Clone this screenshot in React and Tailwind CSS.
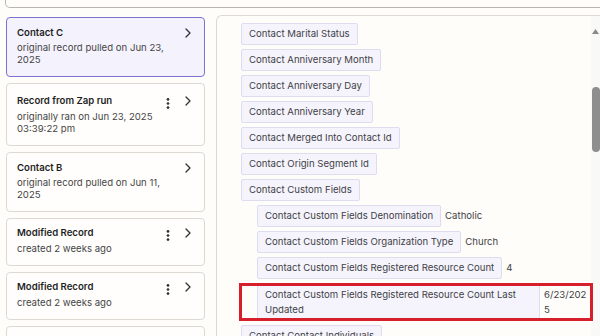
import React from 'react';

const records = [
  { title: 'Contact C', lines: ['original record pulled on Jun 23,', '2025'], active: true, pad: 'pt-[8px] pb-[10px]' },
  { title: 'Record from Zap run', lines: ['originally ran on Jun 23, 2025', '03:39:22 pm'], menu: true, pad: 'pt-[10px] pb-[10px]' },
  { title: 'Contact B', lines: ['original record pulled on Jun 11,', '2025'], pad: 'pt-[8px] pb-[10px]' },
  { title: 'Modified Record', lines: ['created 2 weeks ago'], menu: true, pad: 'pt-[7px] pb-[10px]' },
  { title: 'Modified Record', lines: ['created 2 weeks ago'], menu: true, pad: 'pt-[7px] pb-[10px]' },
  { title: 'Modified Record', lines: ['created 2 weeks ago'], menu: true, pad: 'pt-[7px] pb-[10px]' },
];

const fields = [
  { label: 'Contact Marital Status' },
  { label: 'Contact Anniversary Month' },
  { label: 'Contact Anniversary Day' },
  { label: 'Contact Anniversary Year' },
  { label: 'Contact Merged Into Contact Id' },
  { label: 'Contact Origin Segment Id' },
  { label: 'Contact Custom Fields' },
  { label: 'Contact Custom Fields Denomination', value: 'Catholic', sub: true },
  { label: 'Contact Custom Fields Organization Type', value: 'Church', sub: true },
  { label: 'Contact Custom Fields Registered Resource Count', value: '4', sub: true },
  { label: 'Contact Custom Fields Registered Resource Count Last Updated', value: '6/23/2025', sub: true, marked: true },
  { label: 'Contact Contact Individuals' },
];

const Kebab = () => (
  <svg width="4" height="11" viewBox="0 0 4 11" className="mt-[4px] shrink-0">
    <circle cx="2" cy="1.4" r="1.35" fill="#2f2f2f" />
    <circle cx="2" cy="5.5" r="1.35" fill="#2f2f2f" />
    <circle cx="2" cy="9.6" r="1.35" fill="#2f2f2f" />
  </svg>
);

const Chevron = () => (
  <svg width="6" height="10" viewBox="0 0 6 10" className="mt-[2px] ml-[15px] shrink-0">
    <path d="M1 1l4 4-4 4" fill="none" stroke="#333" strokeWidth="1.3" strokeLinecap="round" strokeLinejoin="round" />
  </svg>
);

const RecordCard = ({ title, lines, active, menu, pad }) => (
  <div
    className={`rounded-[4px] border pl-[10px] pr-[13px] ${pad} ${
      active ? 'border-[#7d72cf] bg-[#f4f2fd]' : 'border-[#dcd9d3] bg-[#fffefc]'
    }`}
  >
    <div className="flex items-start">
      <div className="flex-1 text-[9.6px] font-semibold leading-[14px] text-[#1f1f1f]">{title}</div>
      {menu && <Kebab />}
      <Chevron />
    </div>
    <div className="mt-[2px]">
      {lines.map((l, i) => (
        <div key={i} className="text-[9.6px] leading-[12px] text-[#454545]">
          {l}
        </div>
      ))}
    </div>
  </div>
);

const FieldRow = ({ label, value, sub, marked }) => (
  <div className={`relative flex items-start ${sub ? 'ml-[16px]' : ''}`}>
    <div
      className={`rounded-[2px] border border-[#dedcef] bg-[#f5f4fc] px-[7px] py-[3px] text-[9.6px] text-[#3f3f46] ${
        marked ? 'min-w-0 flex-1 leading-[15px]' : 'shrink-0 leading-[14px]'
      }`}
    >
      {label}
    </div>
    {value && (
      <div
        className={`ml-[4px] text-[9.6px] text-[#3f3f46] ${
          marked ? 'w-[46px] shrink-0 break-all py-[4px] leading-[15px]' : 'py-[4px] leading-[14px]'
        }`}
      >
        {value}
      </div>
    )}
    {marked && (
      <div className="pointer-events-none absolute -left-[18px] -right-[3px] top-0 bottom-0 border-[3px] border-[#d61f2b]" />
    )}
  </div>
);

export default function App() {
  return (
    <div className="h-[336px] w-[600px] overflow-hidden bg-[#fefdfa] font-['Inter',sans-serif]">
      <div className="ml-[5px] -mr-[10px] h-[8px] rounded-b-[5px] border border-t-0 border-[#b9b6b0]" />
      <div className="mt-[7px] flex">
        <div className="ml-[6px] flex w-[199px] shrink-0 flex-col gap-[6px] pt-[2px]">
          {records.map((r, i) => (
            <RecordCard key={i} {...r} />
          ))}
        </div>
        <div className="ml-[11px] flex h-[330px] flex-1 rounded-tl-[6px] border-l border-t border-[#dcd9d3]">
          <div className="flex flex-1 flex-col items-start gap-[4px] pl-[24px] pr-[1px] pt-[7px]">
            {fields.map((f, i) => (
              <div key={i} className={f.marked ? 'w-full pl-[16px]' : ''}>
                {f.marked ? <FieldRow {...f} sub={false} /> : <FieldRow {...f} />}
              </div>
            ))}
          </div>
          <div className="flex w-[9px] shrink-0 flex-col items-center bg-[#f9f9f8] pt-[13px]">
            <svg width="7" height="5" viewBox="0 0 7 5">
              <path d="M3.5 0L7 5H0z" fill="#8a8a8a" />
            </svg>
            <div className="mt-[53px] h-[65px] w-[8px] rounded-full bg-[#8e8e8e]" />
          </div>
        </div>
      </div>
    </div>
  );
}
